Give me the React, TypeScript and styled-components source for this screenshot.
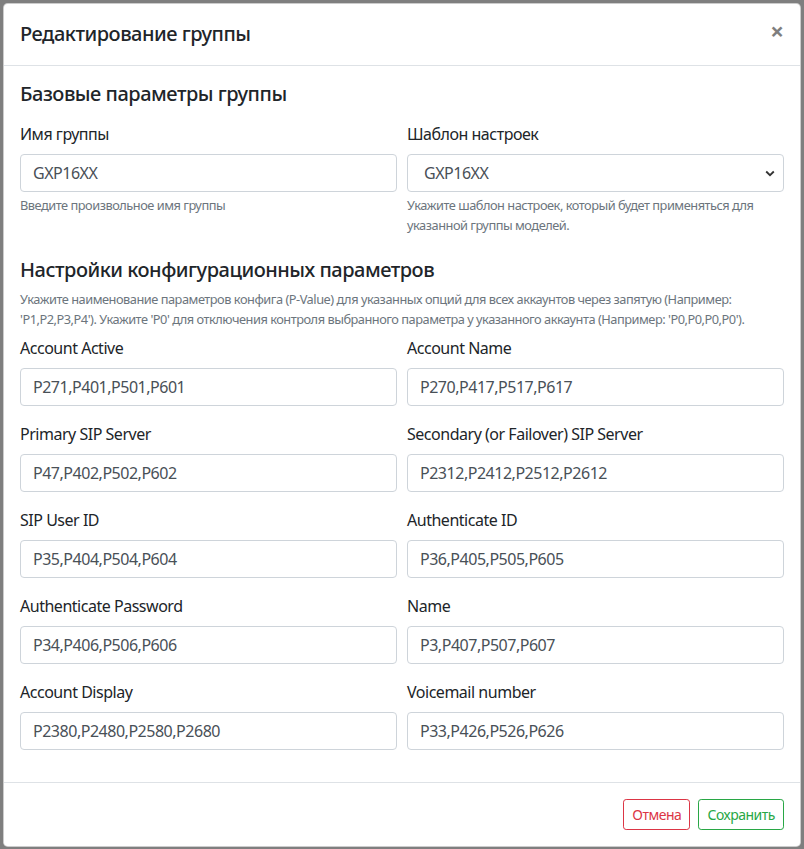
import React from 'react';
import styled, {createGlobalStyle} from "styled-components";

const GlobalStyle = createGlobalStyle`
    html, body {
        margin: 0;
        padding: 0;
        background: #7f7f7f;
    }
    body {
        font-family: "Noto Sans", "Open Sans", sans-serif;
        color: #212529;
        font-size: 16px;
        line-height: 1.5;
        letter-spacing: -0.03em;
    }
    * {
        box-sizing: border-box;
    }
`

const fields = [
    {label: "Account Active", value: "P271,P401,P501,P601"},
    {label: "Account Name", value: "P270,P417,P517,P617"},
    {label: "Primary SIP Server", value: "P47,P402,P502,P602"},
    {label: "Secondary (or Failover) SIP Server", value: "P2312,P2412,P2512,P2612"},
    {label: "SIP User ID", value: "P35,P404,P504,P604"},
    {label: "Authenticate ID", value: "P36,P405,P505,P605"},
    {label: "Authenticate Password", value: "P34,P406,P506,P606"},
    {label: "Name", value: "P3,P407,P507,P607"},
    {label: "Account Display", value: "P2380,P2480,P2580,P2680"},
    {label: "Voicemail number", value: "P33,P426,P526,P626"},
]

export default function App() {
    return (
        <>
            <GlobalStyle/>
            <Backdrop>
                <Dialog>
                    <Header>
                        <Title>Редактирование группы</Title>
                        <CloseButton type="button" aria-label="Close">×</CloseButton>
                    </Header>
                    <Body>
                        <SectionTitle>Базовые параметры группы</SectionTitle>
                        <FormRow>
                            <FormGroup>
                                <Label>Имя группы</Label>
                                <Input readOnly value="GXP16XX"/>
                                <Help>Введите произвольное имя группы</Help>
                            </FormGroup>
                            <FormGroup>
                                <Label>Шаблон настроек</Label>
                                <SelectBox>
                                    <span>GXP16XX</span>
                                    <svg width="10" height="7" viewBox="0 0 10 7">
                                        <path d="M1.2 1.5 L5 5.2 L8.8 1.5" fill="none" stroke="#333" strokeWidth="1.8"/>
                                    </svg>
                                </SelectBox>
                                <Help>Укажите шаблон настроек, который будет применяться для указанной группы моделей.</Help>
                            </FormGroup>
                        </FormRow>

                        <SectionTitle $top={7}>Настройки конфигурационных параметров</SectionTitle>
                        <Description>
                            Укажите наименование параметров конфига (P-Value) для указанных опций для всех аккаунтов через запятую (Например: 'P1,P2,P3,P4'). Укажите 'P0' для отключения контроля выбранного параметра у указанного аккаунта (Например: 'P0,P0,P0,P0').
                        </Description>
                        <FormRow>
                            {fields.map(f => (
                                <FormGroup key={f.label}>
                                    <Label>{f.label}</Label>
                                    <Input readOnly value={f.value}/>
                                </FormGroup>
                            ))}
                        </FormRow>
                    </Body>
                    <Footer>
                        <Button $color="#dc3545">Отмена</Button>
                        <Button $color="#28a745">Сохранить</Button>
                    </Footer>
                </Dialog>
            </Backdrop>
        </>
    );
}

const Backdrop = styled.div`
    min-height: 849px;
    padding: 3px 0 3px 3px;
`

const Dialog = styled.div`
    width: 798px;
    background: #fff;
    border: 1px solid rgba(0, 0, 0, .2);
    border-radius: 4.8px;
    display: flex;
    flex-direction: column;
`

const Header = styled.div`
    display: flex;
    align-items: flex-start;
    justify-content: space-between;
    padding: 15px 16px 16px;
    border-bottom: 1px solid #dee2e6;
`

const Title = styled.h5`
    margin: 0;
    font-size: 20px;
    font-weight: 500;
    line-height: 30px;
`

const CloseButton = styled.button`
    background: transparent;
    border: 0;
    padding: 16px;
    margin: -16px -16px -16px auto;
    font-family: "Noto Sans", sans-serif;
    font-size: 24px;
    font-weight: 700;
    line-height: 1;
    color: #000;
    opacity: .5;
    text-shadow: 0 1px 0 #fff;
`

const Body = styled.div`
    padding: 16px;
`

const SectionTitle = styled.h5<{ $top?: number }>`
    margin: ${p => p.$top ?? 0}px 0 16px;
    font-size: 20px;
    font-weight: 500;
    line-height: 24px;
`

const Description = styled.p`
    margin: -8px 0 7px;
    font-size: 12.8px;
    line-height: 19.5px;
    color: #6c757d;
`

const FormRow = styled.div`
    display: grid;
    grid-template-columns: 1fr 1fr;
    column-gap: 10px;
`

const FormGroup = styled.div`
    display: flex;
    flex-direction: column;
    margin-bottom: 16px;
`

const Label = styled.label`
    margin-bottom: 8px;
    line-height: 24px;
`

const Input = styled.input`
    height: 38px;
    padding: 6px 12px;
    font-family: inherit;
    font-size: 16px;
    letter-spacing: inherit;
    color: #495057;
    border: 1px solid #ced4da;
    border-radius: 4px;
    background: #fff;
    outline: none;
`

const SelectBox = styled.div`
    height: 38px;
    display: flex;
    align-items: center;
    justify-content: space-between;
    padding: 0 8px 0 16px;
    color: #495057;
    border: 1px solid #ced4da;
    border-radius: 4px;
`

const Help = styled.small`
    margin-top: 4px;
    font-size: 12.8px;
    line-height: 19.5px;
    color: #6c757d;
`

const Footer = styled.div`
    display: flex;
    justify-content: flex-end;
    align-items: center;
    gap: 8px;
    padding: 16px;
    border-top: 1px solid #dee2e6;
`

const Button = styled.button<{ $color: string }>`
    height: 31px;
    padding: 4px 8px;
    font-family: inherit;
    font-size: 14px;
    letter-spacing: inherit;
    line-height: 21px;
    color: ${p => p.$color};
    background: transparent;
    border: 1px solid ${p => p.$color};
    border-radius: 3.2px;
`
